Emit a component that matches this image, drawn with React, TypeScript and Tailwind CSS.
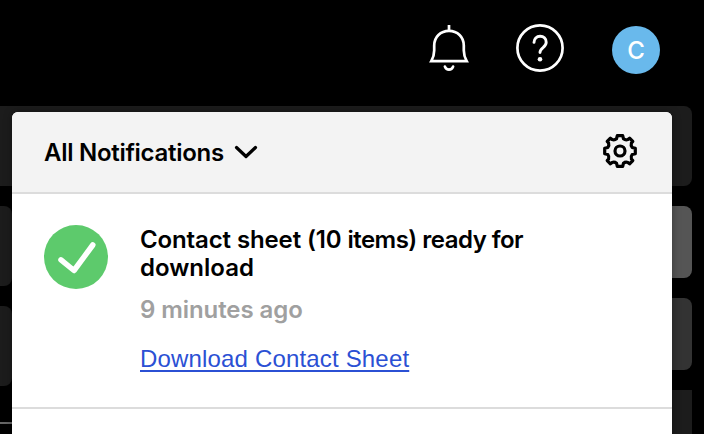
import React from "react";

function BellIcon() {
  return (
    <svg className="h-12 w-12" viewBox="0 0 48 48" fill="none" stroke="white" strokeWidth="2.700">
      <path d="M24 1v6" />
      <path d="M6.300 37.200c1.900-3.500 2.900-6.500 2.900-10.700V21.500C9.200 13 15.500 6.800 24 6.800S38.800 13 38.800 21.500v5c0 4.200 1 7.200 2.900 10.700z" />
      <path d="M19.900 42.600c1.500 4 6.700 4 8.200 0" strokeLinecap="round" />
    </svg>
  );
}

function HelpIcon() {
  return (
    <svg className="h-12 w-12" viewBox="0 0 48 48" fill="none" stroke="white" strokeWidth="2.700">
      <circle cx="24" cy="24" r="22.600" />
      <path d="M18 18.400c0-3.600 2.600-6.200 6.100-6.200 3.500 0 6.100 2.500 6.100 6 0 5.400-6.200 5.200-6.200 10.400" strokeWidth="2.900" strokeLinecap="round" />
      <circle cx="24" cy="35.300" r="2.300" fill="white" stroke="none" />
    </svg>
  );
}

function GearIcon() {
  return (
    <svg className="h-9 w-9" viewBox="0 0 36 36" fill="none" stroke="black" strokeWidth="3.200" strokeLinejoin="round">
      <path d="M15.300 2.700H20.700L21.500 5.800Q23.400 7.400 25.900 6.600L27.600 5.200L30.800 8.400L29.400 10.100Q28.600 12.600 30.200 14.500L33.300 15.300V20.700L30.200 21.500Q28.600 23.400 29.400 25.900L30.800 27.600L27.600 30.800L25.900 29.400Q23.400 28.600 21.500 30.200L20.700 33.300H15.300L14.500 30.200Q12.600 28.600 10.100 29.400L8.400 30.800L5.200 27.600L6.600 25.900Q7.400 23.400 5.800 21.500L2.700 20.700V15.300L5.800 14.500Q7.400 12.600 6.600 10.100L5.200 8.400L8.400 5.200L10.100 6.600Q12.600 7.400 14.500 5.800Z" />
      <circle cx="18" cy="18" r="5" />
    </svg>
  );
}

export default function App() {
  return (
    <div className="relative h-[434px] w-[704px] overflow-hidden bg-black font-['Liberation_Sans',Arial,sans-serif]">
      <header className="flex h-[106px] items-start justify-end gap-12 pr-11">
        <div className="-mr-[15px] pt-6"><BellIcon /></div>
        <div className="pt-6 pl-[10px]"><HelpIcon /></div>
        <div className="mt-[26px] flex h-12 w-12 items-center justify-center rounded-full bg-[#69b9ec] pt-0.5 font-['Inter',sans-serif] text-2xl font-medium text-white">C</div>
      </header>
      <div className="mr-3 h-20 rounded-r-lg bg-[#1c1c1c]" />
      <main className="flex justify-between pt-5 pr-3">
        <div className="flex w-3 flex-col gap-5">
          <div className="h-20 rounded-r-lg bg-[#1c1c1c]" />
          <div className="h-20 rounded-r-lg bg-[#1c1c1c]" />
          <div className="mt-4 h-0.5 bg-[#666]" />
        </div>
        <div className="flex w-20 flex-col gap-5">
          <div className="h-[72px] rounded-lg bg-[#555]" />
          <div className="h-[72px] rounded-lg bg-[#333]" />
          <div className="h-11 bg-[#1c1c1c]" />
        </div>
      </main>

      <section className="absolute top-28 left-3 h-[340px] w-[660px] overflow-hidden rounded-t-md bg-white shadow-[0_0_8px_rgba(0,0,0,0.35)]">
        <div className="flex h-[82px] items-center justify-between border-b-2 border-[#dcdcdc] bg-[#f3f3f3] pr-[34px] pl-8">
          <button className="flex items-center text-2xl text-black">
            <span className="w-[190px] pt-0.5 text-left font-['Inter',sans-serif] font-semibold tracking-[-0.28px] whitespace-nowrap">All Notifications</span>
            <svg className="h-[14px] w-6" viewBox="0 0 24 14" fill="none" stroke="black" strokeWidth="3.200" strokeLinecap="round" strokeLinejoin="round">
              <path d="M2.500 2.500L12 11.500L21.500 2.500" />
            </svg>
          </button>
          <div className="-mt-0.5"><GearIcon /></div>
        </div>
        <article className="flex h-[215px] gap-8 border-b-2 border-[#dcdcdc] px-8 pt-8 text-2xl leading-7">
          <svg className="-mt-px h-16 w-16 shrink-0" viewBox="0 0 64 64" fill="none">
            <circle cx="32" cy="32" r="32" fill="#5dca6c" />
            <path d="M17 34.800L30 45.500L48.800 20" stroke="white" strokeWidth="5.500" strokeLinecap="round" strokeLinejoin="round" />
          </svg>
          <div className="whitespace-nowrap">
            <p className="font-['Inter',sans-serif] font-semibold text-black">
              <span className="tracking-[-0.12px]">Contact sheet (10 </span>
              <span className="tracking-[-0.52px]">items) ready for</span>
              <br />download
            </p>
            <p className="mt-[14px] font-['Inter',sans-serif] font-semibold tracking-[-0.08px] text-[#a0a0a0]">9 minutes ago</p>
            <a className="mt-[21px] block w-fit tracking-[0.17px] text-[#2b50d4] underline decoration-2 underline-offset-[3px]">Download Contact Sheet</a>
          </div>
        </article>
      </section>
    </div>
  );
}
